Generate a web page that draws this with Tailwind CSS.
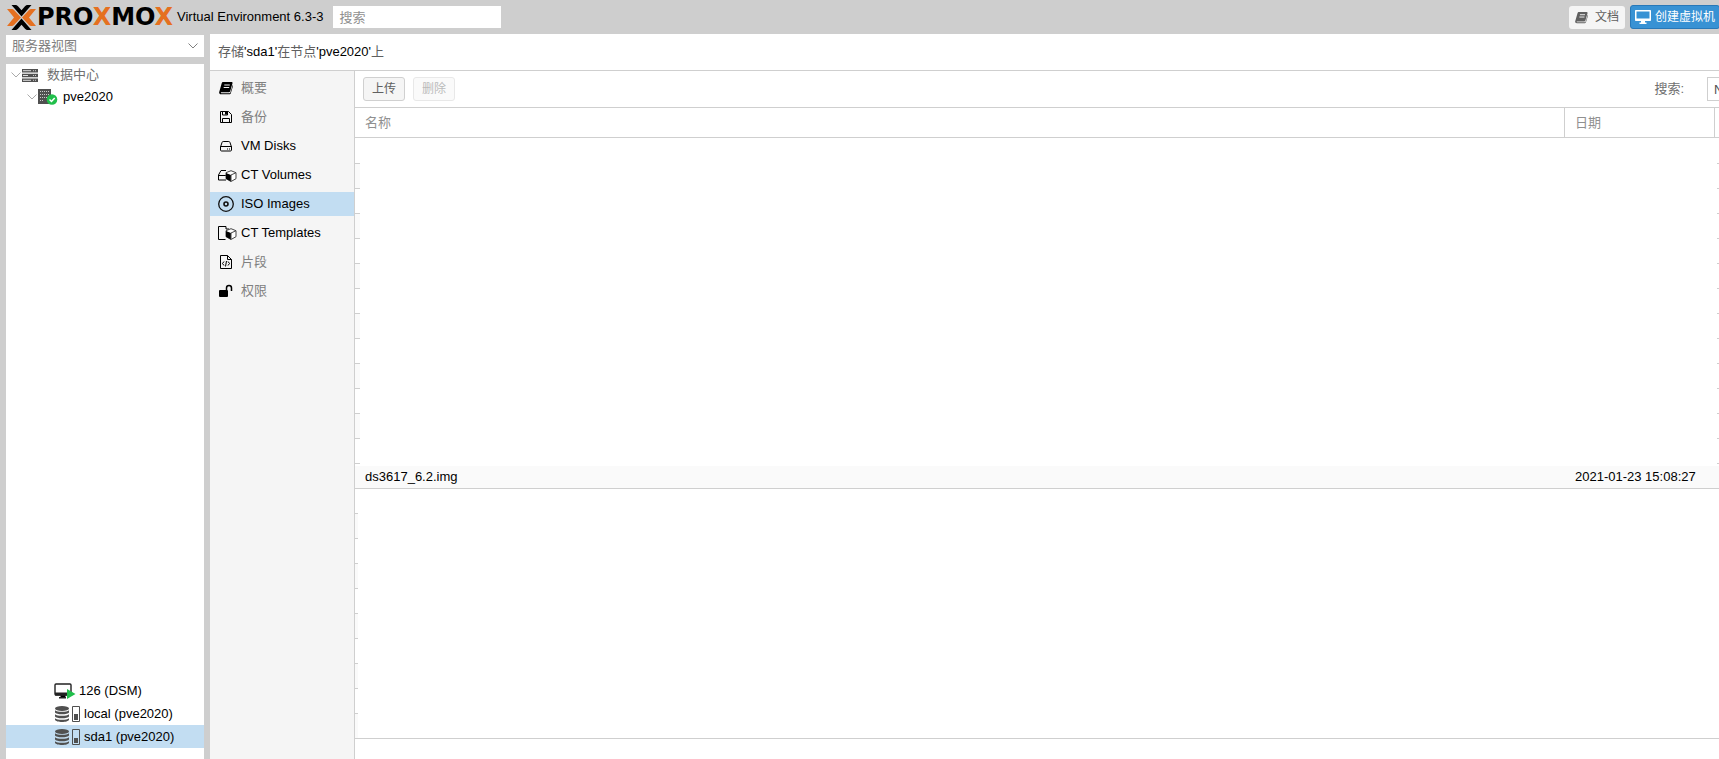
<!DOCTYPE html>
<html lang="zh-CN">
<head>
  <title>pve2020 - Proxmox Virtual Environment</title>
  <meta charset="utf-8">
  <meta name="viewport" content="width=device-width, initial-scale=1">
  <script src="https://cdn.jsdelivr.net/npm/@tailwindcss/browser@4"></script>
</head>
<body class="h-screen flex flex-col overflow-hidden bg-[#cecece] font-['Liberation_Sans','Noto_Sans_CJK_SC',sans-serif] text-[13px] leading-5 text-black">
  <!-- shared icons -->
  <svg class="hidden">
    <symbol id="book" viewBox="0 0 14 14"><path fill="currentColor" d="M4.2 1h8.3c.8 0 1.2.6 1 1.3l-2.3 8c-.2.6-.7 1-1.3 1H2.200c-.5 0-.6.9.2.9h8.200c.4 0 .7-.2.8-.6L13.700 4c.3.2.4.6.3 1l-2.200 7.200c-.2.6-.8 1-1.400 1H2C.6 13.200-.2 11.900.3 10.700L2.700 2.300C2.900 1.500 3.500 1 4.200 1z"/><path stroke="#f5f5f5" d="M5.300 4h5.500M4.700 6.500h5.500"/></symbol>
    <symbol id="db" viewBox="0 0 14 16"><g fill="currentColor"><ellipse cx="7" cy="2.500" rx="7" ry="2.500"/><path d="M0 4.200c2 2 12 2 14 0v2.300c-1 2.400-13 2.400-14 0zM0 8.200c2 2 12 2 14 0v2.300c-1 2.400-13 2.400-14 0zM0 12.200c2 2 12 2 14 0v1.500c-1 3-13 3-14 0z"/></g></symbol>
    <symbol id="cube" viewBox="0 0 12 12"><path d="M6 .7l5 2v6l-5 2.800-5-2.800v-6z" fill="#fff" stroke="#444"/><path d="M1 3l5 2v6.500L1 8.700z" fill="currentColor"/><path d="M6 5l5-2.300M6 5v6" stroke="#444" fill="none"/></symbol>
    <symbol id="down" viewBox="0 0 10 6"><path d="M.5.5L5 5 9.500.5" fill="none" stroke="currentColor"/></symbol>
  </svg>

  <header class="h-[34px] shrink-0 flex items-center pl-[7px]">
    <svg class="w-[29px] h-[25px] shrink-0" viewBox="0 0 29 25">
      <path fill="#e57020" d="M0 4h4c1.500 0 2.500.4 3.500 1.500l6.500 7-6.500 7c-1 1.100-2 1.500-3.500 1.500H0l7-8.500zM29 4h-4c-1.500 0-2.500.4-3.500 1.500l-6.500 7 6.500 7c1 1.100 2 1.500 3.500 1.500h4l-7-8.500z"/>
      <path d="M4.500 0H8c1.300 0 2.200.4 3 1.300l3.500 3.900L18 1.300c.8-.9 1.700-1.300 3-1.300h3.500l-10 11.500zM4.500 25H8c1.300 0 2.200-.4 3-1.300l3.500-3.900 3.500 3.900c.8.9 1.700 1.300 3 1.300h3.500l-10-11.500z"/>
    </svg>
    <span class="ml-px w-[138px] shrink-0 font-['DejaVu_Sans',sans-serif] font-bold text-2xl leading-5">PRO<span class="text-[#e57020]">X</span>MO<span class="text-[#e57020]">X</span></span>
    <span class="ml-[2px] whitespace-nowrap">Virtual Environment 6.3-3</span>
    <input type="text" placeholder="搜索" aria-label="搜索" class="ml-[10px] w-[168px] h-[22px] px-[6px] bg-white outline-none placeholder:text-[#909090]">
    <button class="ml-auto h-[23px] px-[6px] flex items-center gap-[7px] rounded-[3px] bg-[#f5f5f5] text-xs text-[#606060]">
      <svg class="size-[13px]"><use href="#book"/></svg>文档
    </button>
    <button class="ml-[5px] -mr-px h-6 px-1 flex items-center gap-1 rounded-[3px] border border-[#2878b8] bg-[#3892d4] text-xs text-white whitespace-nowrap">
      <svg class="w-4 h-[14px]" viewBox="0 0 16 14"><path fill="currentColor" fill-rule="evenodd" d="M1 0h14c.6 0 1 .4 1 1v9c0 .6-.4 1-1 1h-5v1.500h1.500V14h-7v-1.500H6V11H1c-.6 0-1-.4-1-1V1c0-.6.4-1 1-1zm.5 1.500v7h13v-7z"/></svg>创建虚拟机
    </button>
  </header>

  <div class="flex-1 min-h-0 flex">
    <aside class="w-[210px] shrink-0 px-[6px] pt-px flex flex-col gap-[7px]">
      <button class="h-[22px] shrink-0 flex items-center justify-between px-[6px] bg-white text-[#808080]">
        服务器视图 <svg class="w-[10px] h-[6px]"><use href="#down"/></svg>
      </button>
      <nav class="flex-1 flex flex-col bg-white pb-[11px]">
        <a href="#" class="h-[22px] flex items-center pl-[5px] text-[#707070]">
          <svg class="w-[10px] h-[6px] text-[#aaa]"><use href="#down"/></svg>
          <svg class="w-4 h-[13px] ml-px mr-[9px]" viewBox="0 0 16 13"><path fill="#505050" d="M0 0h16v3.500H0zM0 4.700h16v3.500H0zM0 9.500h16V13H0z"/><path stroke="#ddd" d="M1 1.700h8M1 6.500h5M1 11.300h8"/><path stroke="#ccc" d="M11 1.700h1M13 1.700h1M11 6.500h1M13 6.500h1M11 11.300h1M13 11.300h1"/></svg>
          数据中心
        </a>
        <a href="#" class="h-[22px] flex items-center pl-[21px]">
          <svg class="w-[10px] h-[6px] text-[#aaa]"><use href="#down"/></svg>
          <svg class="w-5 h-4 ml-px mr-[5px]" viewBox="0 0 20 16"><path fill="#505050" d="M0 0h13v15H0z"/><path stroke="#ccc" stroke-dasharray="1 1" d="M2 2.500h9M2 5.500h9M2 8.500h9M2 11.500h3"/><circle cx="14" cy="10.500" r="5.300" fill="#21bf4b"/><path d="M11.500 10.500l2 2 3.200-3.500" fill="none" stroke="#fff" stroke-width="1.500"/></svg>
          pve2020
        </a>
        <a href="#" class="h-[23px] mt-auto flex items-center pl-12">
          <svg class="w-[22px] h-4 mr-[3px]" viewBox="0 0 22 16"><rect x="6.500" y="12" width="5" height="3"/><rect x="1" y="1" width="16" height="11" rx="1" fill="#fff" stroke="#222" stroke-width="1.400"/><path d="M1 9.500h16v3H1zM5 14h7v1.500H5z" fill="#222"/><path d="M13 6l8.500 5L13 16z" fill="#21bf4b"/></svg>
          126 (DSM)
        </a>
        <a href="#" class="h-[23px] flex items-center pl-[49px]">
          <svg class="w-[14px] h-4 text-[#505050]"><use href="#db"/></svg>
          <svg class="w-2 h-4 ml-[3px] mr-1" viewBox="0 0 8 16"><path d="M.5.500h7v15h-7z" fill="#fff" stroke="#505050"/><path d="M2 8h4v6H2z" fill="#505050"/></svg>
          local (pve2020)
        </a>
        <a href="#" class="h-[23px] flex items-center pl-[49px] bg-[#c2ddf2]">
          <svg class="w-[14px] h-4 text-[#505050]"><use href="#db"/></svg>
          <svg class="w-2 h-4 ml-[3px] mr-1" viewBox="0 0 8 16"><path d="M.5.500h7v15h-7z" fill="none" stroke="#505050"/><path d="M2 9h4v5H2z" fill="#505050"/></svg>
          sda1 (pve2020)
        </a>
      </nav>
    </aside>

    <main class="flex-1 min-w-0 flex flex-col bg-white">
      <h1 class="h-[37px] shrink-0 flex items-center px-2 border-b border-[#cfcfcf]"><span><span class="text-[#606060]">存储</span>'sda1'<span class="text-[#606060]">在节点</span>'pve2020'<span class="text-[#606060]">上</span></span></h1>
      <div class="flex-1 min-h-0 flex">
        <nav class="w-[145px] shrink-0 flex flex-col gap-[5px] pt-[5px] bg-[#f5f5f5] border-r border-[#cfcfcf]">
          <a href="#" class="h-6 flex items-center gap-[6px] pl-[7px] text-[#808080]">
            <svg class="w-[18px] h-4 text-black" viewBox="0 0 18 16"><use href="#book" x="2" y="1" width="14" height="14"/></svg>概要
          </a>
          <a href="#" class="h-6 flex items-center gap-[6px] pl-[7px] text-[#808080]">
            <svg class="w-[18px] h-4" viewBox="0 0 18 16"><path d="M3.500 2.500h8l3 3v8h-11zM5.500 2.500V6h5V2.500M5.500 13.500v-4h7v4" fill="none" stroke="#000"/><path d="M8 3h2v2.500H8z"/></svg>备份
          </a>
          <a href="#" class="h-6 flex items-center gap-[6px] pl-[7px]">
            <svg class="w-[18px] h-4" viewBox="0 0 18 16"><path d="M3.500 9v3c0 .6.4 1 1 1h9c.6 0 1-.4 1-1V9L13 4.500c-.2-.6-.6-1-1.200-1H6.200c-.6 0-1 .4-1.200 1zM3.500 8.500h11M10 11h1M12 11h1" fill="none" stroke="#000"/></svg>VM Disks
          </a>
          <a href="#" class="h-6 flex items-center gap-1 pl-[7px]">
            <svg class="w-5 h-4" viewBox="0 0 20 16"><path d="M9 3.500H4L1.500 8v5H9M1.500 8.500H9" fill="none" stroke="#000"/><use href="#cube" x="8" y="3" width="12" height="12"/></svg>CT Volumes
          </a>
          <a href="#" class="h-6 flex items-center gap-[6px] pl-[7px] bg-[#c2ddf2]">
            <svg class="w-[18px] h-4" viewBox="0 0 18 16"><g fill="none" stroke="#111"><circle cx="9" cy="8" r="7.300" stroke-width="1.300"/><circle cx="9" cy="8" r="2" stroke-width="1.600"/></g></svg>ISO Images
          </a>
          <a href="#" class="h-6 flex items-center gap-1 pl-[7px]">
            <svg class="w-5 h-4" viewBox="0 0 20 16"><path d="M8.500 14.500h-7v-13H9V4h3" fill="none" stroke="#000"/><use href="#cube" x="8" y="3" width="12" height="12"/></svg>CT Templates
          </a>
          <a href="#" class="h-6 flex items-center gap-[6px] pl-[7px] text-[#808080]">
            <svg class="w-[18px] h-4" viewBox="0 0 18 16"><path d="M3.500 1.500h7l4 4v9h-11zM10.500 1.500v4h4M7 7.500l-1.500 2L7 11.500M11 7.500l1.500 2L11 11.500M9.500 7l-1 5.500" fill="none" stroke="#000"/></svg>片段
          </a>
          <a href="#" class="h-6 flex items-center gap-[6px] pl-[7px] text-[#808080]">
            <svg class="w-[18px] h-4" viewBox="0 0 18 16"><rect x="2" y="7" width="9" height="7" rx="1"/><path d="M9.500 7V5a2.500 2.500 0 0 1 5 0v3" fill="none" stroke="#000" stroke-width="1.500"/></svg>权限
          </a>
        </nav>

        <section class="flex-1 min-w-0 overflow-hidden">
          <div class="h-[37px] flex items-center pl-2 border-b border-[#cfcfcf]">
            <button class="w-[42px] h-6 rounded-[3px] border border-[#d0d0d0] bg-[#f5f5f5] text-xs text-[#606060]">上传</button>
            <button disabled class="ml-2 w-[42px] h-6 rounded-[3px] border border-[#e8e8e8] bg-[#fafafa] text-xs text-[#bbb]">删除</button>
            <label for="filter" class="ml-auto mr-[23px] text-[#707070]">搜索:</label>
            <!-- field runs off the right edge of the panel -->
            <div class="w-3"><input id="filter" type="text" value="Name, Format" class="w-[180px] h-6 px-[6px] border border-[#cfcfcf] text-[#505050] outline-none"></div>
          </div>
          <table class="w-full table-fixed border-separate border-spacing-0">
            <colgroup><col><col class="w-[150px]"><col class="w-[5px]"></colgroup>
            <thead>
              <tr class="h-[30px] text-left text-[#909090]">
                <th class="p-0 pl-[10px] font-normal border-b border-[#cfcfcf]">名称</th>
                <th class="p-0 pl-[10px] font-normal border-b border-l border-[#cfcfcf]">日期</th>
                <th class="p-0 border-b border-l border-[#cfcfcf]"></th>
              </tr>
            </thead>
            <tbody id="above"></tbody>
            <tbody>
              <tr class="h-[25px]">
                <td class="p-0 border-b border-[#cfcfcf]"><div class="mt-[2px] h-[22px] pl-[10px] leading-[22px] bg-[#fafafa]">ds3617_6.2.img</div></td>
                <td class="p-0 border-b border-[#cfcfcf]"><div class="mt-[2px] h-[22px] pl-[11px] leading-[22px] bg-[#fafafa] whitespace-nowrap">2021-01-23 15:08:27</div></td>
                <td class="p-0 border-b border-[#cfcfcf]"><div class="mt-[2px] h-[22px] bg-[#fafafa]"></div></td>
              </tr>
            </tbody>
            <tbody id="below"></tbody>
          </table>
          <div class="border-b border-[#cfcfcf]"></div>
        </section>
      </div>
    </main>
  </div>

  <script>
    // blank grid rows: only the ends of the row lines show
    const row = (left, stripe, right) => `<tr class="h-[25px]">
      <td class="p-0"><div class="${left} h-[25px] border-b border-[#cfcfcf] ${stripe ? "bg-[#fafafa]" : ""}"></div></td>
      <td class="p-0"></td>
      <td class="p-0"><div class="ml-auto w-[2px] h-[25px] ${right}"></div></td></tr>`;
    let above = '<tr class="h-px"><td class="p-0"></td></tr>';
    for (let i = 0; i < 13; i++) above += row("w-[5px]", i % 2, "border-b border-[#cfcfcf]");
    let below = "";
    for (let i = 0; i < 9; i++) below += row("w-[3px]", i % 2, "");
    below += '<tr class="h-6"><td class="p-0"><div class="w-[3px] h-6 bg-[#fafafa]"></div></td></tr>';
    document.getElementById("above").innerHTML = above;
    document.getElementById("below").innerHTML = below;
  </script>
</body>
</html>
